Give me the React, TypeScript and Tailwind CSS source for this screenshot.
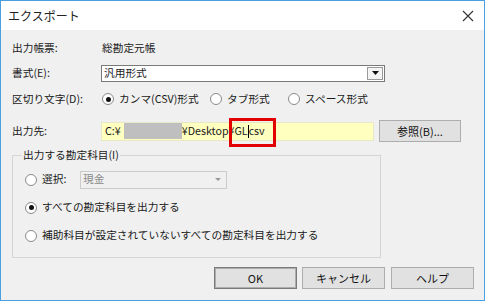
import React from "react";

const font = { fontFamily: '"Noto Sans CJK JP", "Noto Sans", sans-serif' };

function Radio({ checked }: { checked?: boolean }) {
  return (
    <span className="relative inline-flex h-[12px] w-[12px] shrink-0 items-center justify-center rounded-full border border-[#8a8a8a] bg-white">
      {checked && <span className="h-[5px] w-[5px] rounded-full bg-[#111]" />}
    </span>
  );
}

function Btn({ children, w, def }: { children: React.ReactNode; w: string; def?: boolean }) {
  return (
    <div
      className={`flex h-[22px] items-center justify-center bg-[#e1e1e1] text-[11px] text-[#111] ${w} ${
        def ? "border border-[#7a7a7a] shadow-[inset_0_0_0_1px_#adadad]" : "border border-[#adadad]"
      }`}
    >
      {children}
    </div>
  );
}

export default function App() {
  return (
    <div style={font} className="h-[301px] w-[485px] overflow-hidden bg-[#f0f0f0] text-[10.7px] leading-none text-[#1a1a1a]">
      <div className="flex h-[301px] w-[485px] flex-col border border-[#4a9fe0]">
        {/* title bar */}
        <div className="flex h-[29px] shrink-0 items-center justify-between bg-white pl-[7px] pr-[10px]">
          <span className="text-[12px] text-[#222]">エクスポート</span>
          <svg width="12" height="12" viewBox="0 0 12 12">
            <path d="M1 1 L11 11 M11 1 L1 11" stroke="#333" strokeWidth="1.1" />
          </svg>
        </div>

        {/* body */}
        <div className="flex flex-col pl-[11px] pt-[8px]">
          <div className="flex h-[20px] items-center">
            <span className="w-[90px]">出力帳票:</span>
            <span>総勘定元帳</span>
          </div>

          <div className="mt-[5px] flex h-[20px] items-center">
            <span className="w-[89px]">書式(E):</span>
            <div className="flex h-[17px] w-[284px] items-center justify-between border border-[#7a7a7a] bg-white pl-[2px] pr-[1px]">
              <span>汎用形式</span>
              <span className="flex h-[13px] w-[16px] items-center justify-center border border-[#9a9a9a] bg-[#f4f4f4]">
                <svg width="7" height="4" viewBox="0 0 7 4">
                  <path d="M0 0 H7 L3.5 4 Z" fill="#111" />
                </svg>
              </span>
            </div>
          </div>

          <div className="mt-[6px] flex h-[20px] items-center">
            <span className="w-[90px]">区切り文字(D):</span>
            <div className="flex items-center">
              <Radio checked />
              <span className="ml-[5px] w-[91px]">カンマ(CSV)形式</span>
              <Radio />
              <span className="ml-[5px] w-[61px]">タブ形式</span>
              <Radio />
              <span className="ml-[5px]">スペース形式</span>
            </div>
          </div>

          <div className="mt-[12px] flex h-[20px] items-center">
            <span className="w-[89px]">出力先:</span>
            <div className="relative flex h-[19px] w-[273px] items-center border border-[#e8e8c8] bg-[#ffffc0] pl-[3px]">
              <span>C:¥</span>
              <span className="ml-[3px] h-[16px] w-[58px] bg-[#bfbfbf]" />
              <span>¥Desktop¥GL</span>
              <span className="h-[13px] w-[1px] bg-black" />
              <span>csv</span>
              <span className="absolute left-[127px] top-[-5px] h-[29px] w-[47px] border-[3px] border-[#e30000]" />
            </div>
            <div className="ml-[5px]">
              <Btn w="w-[82px]">参照(B)...</Btn>
            </div>
          </div>

          <fieldset className="mt-[9px] h-[108px] w-[369px] border border-[#d5d5d5] pl-[9px] pr-0">
            <legend className="ml-[0px] px-[1px] text-[10.7px]">出力する勘定科目(I)</legend>
            <div className="mt-[10px] flex h-[18px] items-center pl-[3px]">
              <Radio />
              <span className="ml-[5px] w-[38px]">選択:</span>
              <div className="flex h-[18px] w-[147px] items-center justify-between border border-[#cccccc] bg-[#f0f0f0] pl-[2px]">
                <span className="text-[#8a8a8a]">現金</span>
                <span className="flex h-[16px] w-[16px] items-center justify-center">
                  <svg width="6" height="3" viewBox="0 0 6 3">
                    <path d="M0 0 H6 L3 3 Z" fill="#9a9a9a" />
                  </svg>
                </span>
              </div>
            </div>
            <div className="mt-[10px] flex h-[18px] items-center pl-[3px]">
              <Radio checked />
              <span className="ml-[5px]">すべての勘定科目を出力する</span>
            </div>
            <div className="mt-[10px] flex h-[18px] items-center pl-[3px]">
              <Radio />
              <span className="ml-[5px]">補助科目が設定されていないすべての勘定科目を出力する</span>
            </div>
          </fieldset>

          <div className="mt-[9px] flex items-center pl-[202px]">
            <Btn w="w-[83px]" def>
              OK
            </Btn>
            <div className="ml-[5px]">
              <Btn w="w-[83px]">キャンセル</Btn>
            </div>
            <div className="ml-[6px]">
              <Btn w="w-[83px]">ヘルプ</Btn>
            </div>
          </div>
        </div>
      </div>
    </div>
  );
}
